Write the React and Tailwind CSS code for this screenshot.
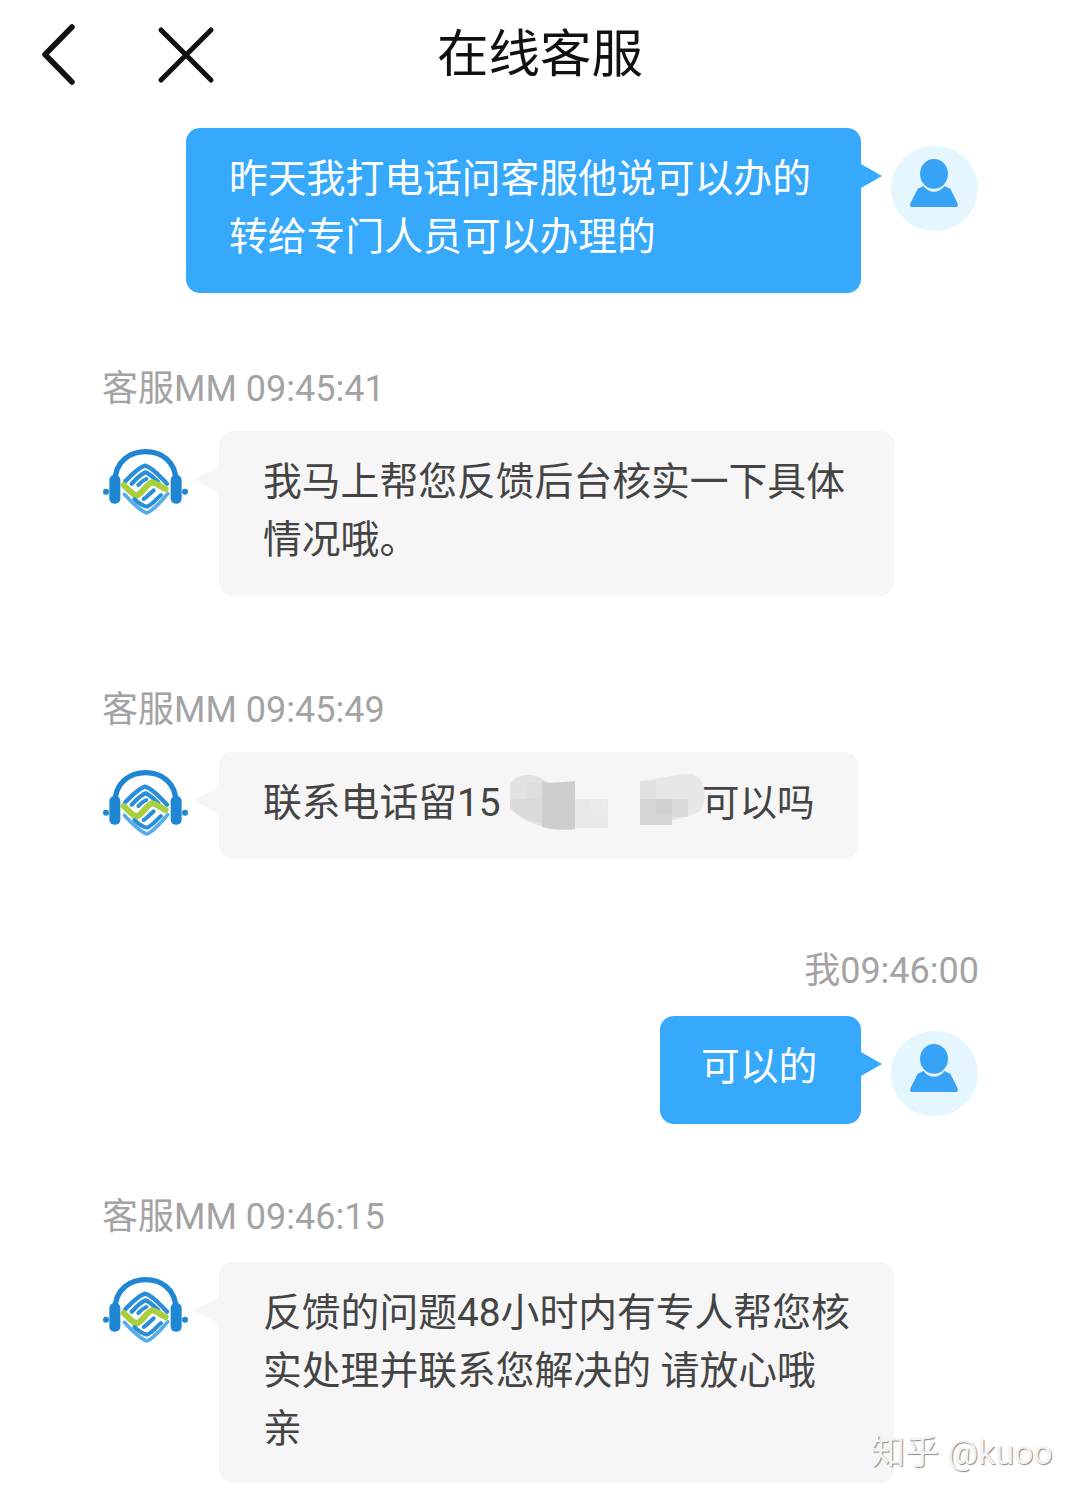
const FONT = { fontFamily: 'Roboto, "Noto Sans CJK SC", sans-serif' };

const ServiceLogo = () => (
  <svg width="85" height="70" viewBox="0 0 255 210" fill="none" strokeLinecap="round" strokeLinejoin="round">
    <path d="M36 105 C36 40 84 14 128 14 C172 14 219 40 219 105" stroke="#1f86d4" strokeWidth="16" />
    <circle cx="9" cy="134" r="9" fill="#1f86d4" />
    <circle cx="246" cy="134" r="9" fill="#1f86d4" />
    <rect x="19" y="84" width="33" height="86" rx="15" fill="#1f86d4" />
    <rect x="203" y="84" width="33" height="86" rx="15" fill="#1f86d4" />
    <path d="M66 104 C85 84 105 62 126 56 C150 62 172 90 192 110" stroke="#2a8fd8" strokeWidth="13" />
    <path d="M86 110 C98 98 112 82 128 76 C142 82 154 94 166 106" stroke="#2a8fd8" strokeWidth="13" />
    <path d="M106 114 C112 108 120 100 130 96" stroke="#2a8fd8" strokeWidth="12" />
    <path d="M62 114 C76 128 88 142 101 146 C118 140 132 110 146 106 C160 108 174 120 188 126" stroke="#a9cf3f" strokeWidth="18" />
    <path d="M64 142 C84 164 108 190 131 198 C154 190 176 160 194 140" stroke="#56aee9" strokeWidth="11" />
    <path d="M94 156 C106 168 118 176 131 179 C146 176 160 156 174 144" stroke="#2a8fd8" strokeWidth="12" />
    <path d="M122 156 C132 150 142 138 152 130" stroke="#2a8fd8" strokeWidth="12" />
  </svg>
);

const UserAvatar = ({ className }) => (
  <div className={`flex h-[85px] w-[87px] shrink-0 items-center justify-center rounded-full bg-[#e5f6ff] pb-[9px] pr-[2px] ${className}`}>
    <svg width="50" height="50" viewBox="0 0 52 52" fill="#36a3f7">
      <ellipse cx="26" cy="15.5" rx="14.5" ry="15.5" />
      <path d="M15 28 C18 32 22 34 26 34 C30 34 34 32 37 28 C39 29 41 30 43 31 L50.5 46 C51.5 49 50 50 48 50 L4 50 C2 50 0.5 49 1.5 46 L9 31 C11 30 13 29 15 28 Z" />
    </svg>
  </div>
);

const MyMessage = ({ time, lines, className, bubbleClass, avatarOffset }) => (
  <div className={className}>
    {time && <div className="mb-[23px] pr-[101px] pt-[1px] text-right text-[36px] leading-[44px] text-[#a3a3a3]">{time}</div>}
    <div className="flex items-start justify-end pr-[102px]">
      <div className={`relative rounded-[14px] bg-[#36a9fc] pt-[22px] text-[38.8px] leading-[58px] text-white ${bubbleClass}`}>
        {lines.map((l) => <div key={l} className="whitespace-nowrap">{l}</div>)}
        <svg className="absolute left-full top-[36px]" width="21" height="24" viewBox="0 0 21 24" fill="#36a9fc">
          <path d="M0 0 L21 12 L0 24 Z" />
        </svg>
      </div>
      <UserAvatar className={`ml-[30px] ${avatarOffset}`} />
    </div>
  </div>
);

const ServiceMessage = ({ time, lines, className, bubbleClass, children }) => (
  <div className={className}>
    <div className="pl-[102px] pt-[1px] text-[36px] leading-[44px] text-[#a3a3a3]">{time}</div>
    <div className="mt-[20px] flex items-start pl-[103px]">
      <div className="mt-[16px] w-[116px] shrink-0"><ServiceLogo /></div>
      <div className={`relative rounded-[14px] bg-[#f6f6f6] pl-[44px] pt-[22px] text-[38.8px] leading-[58px] text-[#444] ${bubbleClass}`}>
        <svg className="absolute right-full top-[36px]" width="26" height="26" viewBox="0 0 26 26" fill="#f6f6f6">
          <path d="M26 0 L0 12 L26 26 Z" />
        </svg>
        {lines.map((l) => <div key={l} className="whitespace-nowrap">{l}</div>)}
        {children}
      </div>
    </div>
  </div>
);

// 打码的马赛克块
const Mosaic = () => (
  <svg className="absolute left-[291px] top-[21px]" width="200" height="58" viewBox="0 0 200 58">
    <path d="M0 12 C4 0 26 0 32 6 C38 11 44 10 65 8 L65 56 C40 58 10 50 0 34 Z" fill="#e2e2e1" />
    <path d="M32 8 C38 11 44 10 65 8 L65 56 C52 58 40 56 32 54 Z" fill="#cfcdd0" />
    <path d="M0 26 H32 V50 C18 48 6 42 0 34 Z" fill="#d9dad9" />
    <rect x="16" y="10" width="16" height="16" fill="#dddedd" />
    <rect x="65" y="26" width="33" height="29" fill="#e8e8e7" />
    <rect x="81" y="26" width="16" height="14" fill="#eee9eb" />
    <path d="M130 8 C148 6 170 0 182 1 C196 6 199 24 190 38 C176 46 150 50 130 52 Z" fill="#e6e7e6" />
    <rect x="130" y="8" width="16" height="18" fill="#e2e0e1" />
    <rect x="130" y="26" width="32" height="26" fill="#d4d6d4" />
    <rect x="146" y="26" width="16" height="16" fill="#cfd2d0" />
    <rect x="162" y="26" width="16" height="18" fill="#dcdadc" />
  </svg>
);

export default function App() {
  return (
    <div className="relative h-[1497px] w-[1080px] overflow-hidden bg-white" style={FONT}>
      {/* 顶部栏 */}
      <header className="flex h-[128px] items-start pl-[40px] pt-[23px]">
        <svg width="38" height="64" viewBox="0 0 38 64" fill="none" stroke="#111" strokeWidth="5.5" strokeLinecap="round" strokeLinejoin="round">
          <path d="M32 4 L5 31.5 L32 59" />
        </svg>
        <svg className="ml-[79px] mt-[3px]" width="58" height="58" viewBox="0 0 58 58" fill="none" stroke="#111" strokeWidth="5" strokeLinecap="round">
          <path d="M4 4 L54 54 M54 4 L4 54" />
        </svg>
        <div className="ml-[222px] text-[51.5px] leading-[64px] text-[#111]">在线客服</div>
      </header>

      <MyMessage
        lines={["昨天我打电话问客服他说可以办的", "转给专门人员可以办理的"]}
        bubbleClass="w-[675px] pb-[27px] pl-[43px]"
        avatarOffset="mt-[18px]"
      />

      <ServiceMessage
        className="mt-[73px]"
        time="客服MM 09:45:41"
        bubbleClass="w-[675px] pb-[27px]"
        lines={["我马上帮您反馈后台核实一下具体", "情况哦。"]}
      />

      <ServiceMessage className="mt-[91px]" time="客服MM 09:45:49" bubbleClass="w-[639px] pb-[27px]" lines={["联系电话留15"]}>
        <Mosaic />
        <span className="absolute left-[483px] top-[22px] text-[37.5px]">可以吗</span>
      </ServiceMessage>

      <MyMessage className="mt-[89px]" time="我09:46:00" lines={["可以的"]} bubbleClass="w-[201px] pb-[28px] pl-[41px]" avatarOffset="mt-[15px]" />

      <ServiceMessage
        className="mt-[70px]"
        time="客服MM 09:46:15"
        bubbleClass="mt-[3px] w-[675px] pb-[25px]"
        lines={["反馈的问题48小时内有专人帮您核", "实处理并联系您解决的 请放心哦", "亲"]}
      />

      {/* 水印 */}
      <div className="absolute left-[871px] top-[1430px] text-[34px] leading-[44px] text-[#f4f4f4] [text-shadow:1px_1px_1px_#8a8a8a]">知乎 @kuoo</div>
    </div>
  );
}
